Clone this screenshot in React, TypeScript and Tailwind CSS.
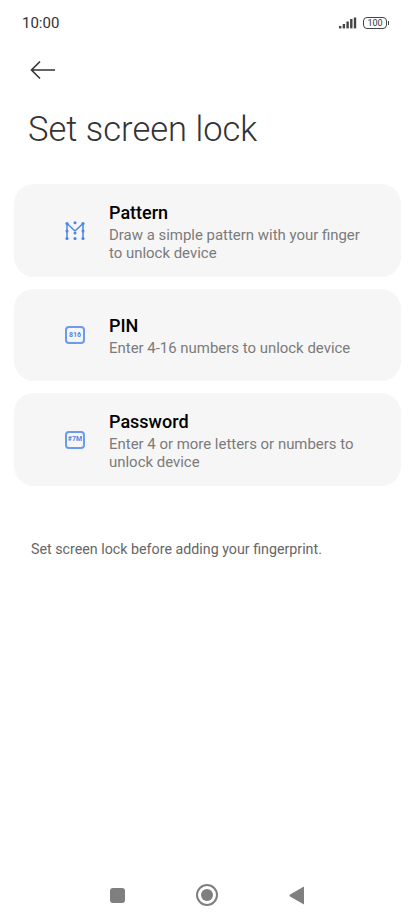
import { ReactNode } from "react";

function PatternIcon() {
  return (
    <svg width="20" height="20" viewBox="0 0 20 20" fill="none">
      <path d="M2 2.5V17.5M18 2.5V17.5M2 2.5L10 10M18 2.5L10 10" stroke="#4a86e8" strokeWidth="1.5" />
      <g fill="#4a86e8">
        <circle cx="2" cy="2.5" r="1.6" />
        <circle cx="10" cy="1.8" r="1.5" />
        <circle cx="18" cy="2.5" r="1.6" />
        <circle cx="2" cy="10" r="1.5" />
        <circle cx="10" cy="12" r="1.5" />
        <circle cx="18" cy="10" r="1.5" />
        <circle cx="2" cy="17.5" r="1.6" />
        <circle cx="10" cy="17.5" r="1.6" />
        <circle cx="18" cy="17.5" r="1.6" />
      </g>
    </svg>
  );
}

function CodeIcon({ code }: { code: string }) {
  return (
    <div className="flex h-[18px] w-5 items-center justify-center rounded-[4px] border-2 border-[#6a9bee] text-[7px] font-bold leading-none text-[#4a86e8]">
      {code}
    </div>
  );
}

function Option({ icon, title, children, className }: { icon: ReactNode; title: string; children: ReactNode; className: string }) {
  return (
    <div className={`flex items-center rounded-[20px] bg-[#f6f6f6] pl-[51px] pr-4 ${className}`}>
      <div className="flex w-[44px] shrink-0 items-center">{icon}</div>
      <div>
        <div className="mb-px text-[18px] font-medium leading-[25px] text-black">{title}</div>
        <div className="text-[14.95px] leading-[18px] text-[#7b7b7b]">{children}</div>
      </div>
    </div>
  );
}

function StatusIcons() {
  return (
    <div className="flex items-center gap-[6px]">
      <svg width="18" height="12" viewBox="0 0 18 12" fill="#444">
        <rect x="0" y="9" width="2.4" height="2.4" />
        <rect x="3.7" y="7" width="2.4" height="4.4" />
        <rect x="7.4" y="4.5" width="2.4" height="6.9" />
        <rect x="11.1" y="2" width="2.4" height="9.4" />
        <rect x="14.8" y="0.5" width="2.4" height="10.9" />
      </svg>
      <div className="flex items-center">
        <div className="flex h-3 w-[24px] items-center justify-center rounded-[4px] border border-[#444] text-[9px] leading-none text-[#333]">
          100
        </div>
        <div className="ml-[1px] h-1 w-px bg-[#444]" />
      </div>
    </div>
  );
}

export default function App() {
  return (
    <div className="flex h-[923px] w-[415px] flex-col overflow-hidden bg-white font-['Roboto',sans-serif]">
      <div className="flex h-[46px] items-center justify-between pl-[22px] pr-[26px]">
        <span className="text-[15px] text-[#333]">10:00</span>
        <StatusIcons />
      </div>
      <div className="pl-[30px] pt-[14px]">
        <svg width="26" height="20" viewBox="0 0 26 20" fill="none" stroke="#333" strokeWidth="1.6">
          <path d="M1.5 10H25M10 1.5L1.5 10L10 18.5" />
        </svg>
      </div>
      <h1 className="mt-[29px] pl-[28px] text-[34.5px] font-light leading-[40px] text-[#333]">Set screen lock</h1>
      <div className="mt-[35px] flex flex-col gap-3 px-[14px]">
        <Option icon={<PatternIcon />} title="Pattern" className="h-[93px]">
          Draw a simple pattern with your finger
          <br />
          to unlock device
        </Option>
        <Option icon={<CodeIcon code="816" />} title="PIN" className="h-[92px]">
          Enter 4-16 numbers to unlock device
        </Option>
        <Option icon={<CodeIcon code="#7M" />} title="Password" className="h-[93px]">
          Enter 4 or more letters or numbers to
          <br />
          unlock device
        </Option>
      </div>
      <p className="mt-[45px] pl-[31px] text-[14.25px] leading-[36px] text-[#666]">
        Set screen lock before adding your fingerprint.
      </p>
      <div className="mt-auto flex h-[47px] items-start pl-[110px] pt-[8px]">
        <div className="mt-[4px] h-[15px] w-[15px] rounded-[3px] bg-[#7f7f7f]" />
        <div className="ml-[71px] flex h-[22px] w-[22px] items-center justify-center rounded-full border-2 border-[#7f7f7f]">
          <div className="h-3 w-3 rounded-full bg-[#7f7f7f]" />
        </div>
        <svg className="ml-[71px] mt-[2px]" width="16" height="19" viewBox="0 0 16 19" fill="#7f7f7f">
          <path d="M15 0.5V18.5L1 10.5Q0 9.5 1 8.5Z" />
        </svg>
      </div>
    </div>
  );
}
